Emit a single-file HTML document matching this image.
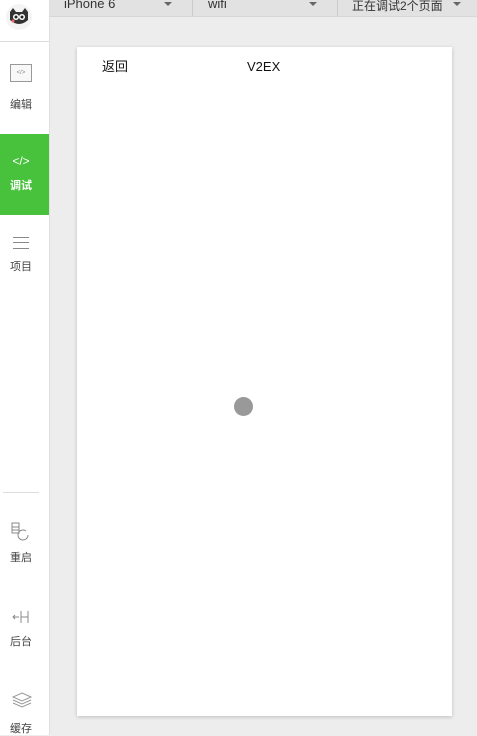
<!DOCTYPE html><html><head><meta charset="utf-8"><style>
body{margin:0;width:477px;height:735px;background:#ededed;position:relative;overflow:hidden;font-family:"Liberation Sans","Noto Sans CJK SC",sans-serif}
.side{position:absolute;left:0;top:0;width:49px;height:735px;background:#fff;border-right:1px solid #e0e0e0}
.lbl{position:absolute;left:0;width:42px;text-align:center;font-size:11px;color:#444}
.top{position:absolute;left:50px;top:0;width:427px;height:16px;background:#e2e2e2;border-bottom:1px solid #d6d6d6}
.tt{position:absolute;top:-4px;font-size:13px;color:#333}
.ar{position:absolute;top:2px;width:0;height:0;border-left:4px solid transparent;border-right:4px solid transparent;border-top:4px solid #666}
.card{position:absolute;left:77px;top:47px;width:375px;height:669px;background:#fff;box-shadow:0 1px 4px rgba(0,0,0,.2)}
</style></head><body>
<div class="side">
<div style="position:absolute;left:6px;top:4px;width:26px;height:26px;border-radius:50%;background:#f4f4f4"></div>
<svg style="position:absolute;left:7px;top:6px" width="24" height="22"><path d="M3 6 L6 2 L9 6 L15 6 L18 2 L21 6 L21 14 Q12 22 3 14Z" fill="#333"/><circle cx="9" cy="11" r="3" fill="#fff"/><circle cx="15" cy="11" r="3" fill="#fff"/><circle cx="9" cy="11" r="1.5" fill="#222"/><circle cx="15" cy="11" r="1.5" fill="#222"/><circle cx="6" cy="15" r="1.5" fill="#e66"/></svg>
<div style="position:absolute;left:0;top:41px;width:49px;border-top:1px solid #ddd"></div>
<div style="position:absolute;left:10px;top:64px;width:20px;height:16px;border:1px solid #999;background:#f8f8f8;font-size:6px;color:#888;text-align:center;line-height:16px">&lt;/&gt;</div>
<div class="lbl" style="top:96px">编辑</div>
<div style="position:absolute;left:0;top:134px;width:49px;height:81px;background:#48c23d"></div>
<div class="lbl" style="top:154px;color:#fff;font-size:12px">&lt;/&gt;</div>
<div class="lbl" style="top:177px;color:#fff;font-weight:bold">调试</div>
<div style="position:absolute;left:13px;top:237px;width:16px;height:10px;border-top:1px solid #888;border-bottom:1px solid #888"></div>
<div style="position:absolute;left:13px;top:242px;width:16px;border-top:1px solid #888"></div>
<div class="lbl" style="top:258px">项目</div>
<div style="position:absolute;left:3px;top:492px;width:36px;border-top:1px solid #ddd"></div>
<svg style="position:absolute;left:11px;top:522px" width="20" height="20" fill="none" stroke="#888"><rect x="1" y="1" width="7" height="10"/><path d="M1 5h7M1 8h7"/><path d="M17 13a5 5 0 1 1-2-4"/></svg>
<div class="lbl" style="top:549px">重启</div>
<svg style="position:absolute;left:12px;top:609px" width="20" height="16" fill="none" stroke="#888"><path d="M1 8h6M3 6l-2 2 2 2M9 2v12M16 2v12M9 8h7"/></svg>
<div class="lbl" style="top:633px">后台</div>
<svg style="position:absolute;left:11px;top:692px" width="22" height="16" fill="none" stroke="#999"><path d="M11 1l9 4-9 4-9-4z"/><path d="M2 8l9 4 9-4M2 11l9 4 9-4"/></svg>
<div class="lbl" style="top:720px">缓存</div>
</div>
<div class="top">
<span class="tt" style="left:14px">iPhone 6</span><span class="ar" style="left:114px"></span>
<div style="position:absolute;left:142px;top:0;height:16px;border-left:1px solid #ccc"></div>
<span class="tt" style="left:158px">wifi</span><span class="ar" style="left:259px"></span>
<div style="position:absolute;left:287px;top:0;height:16px;border-left:1px solid #ccc"></div>
<span class="tt" style="left:302px;font-size:12px;top:-3px">正在调试2个页面</span><span class="ar" style="left:403px"></span>
</div>
<div class="card">
<span style="position:absolute;left:25px;top:12px;font-size:13px;color:#111;line-height:15px">返回</span>
<span style="position:absolute;left:170px;top:12px;font-size:13px;color:#111;line-height:15px">V2EX</span>
<div style="position:absolute;left:157px;top:350px;width:19px;height:19px;border-radius:50%;background:#999"></div>
</div>
</body></html>
